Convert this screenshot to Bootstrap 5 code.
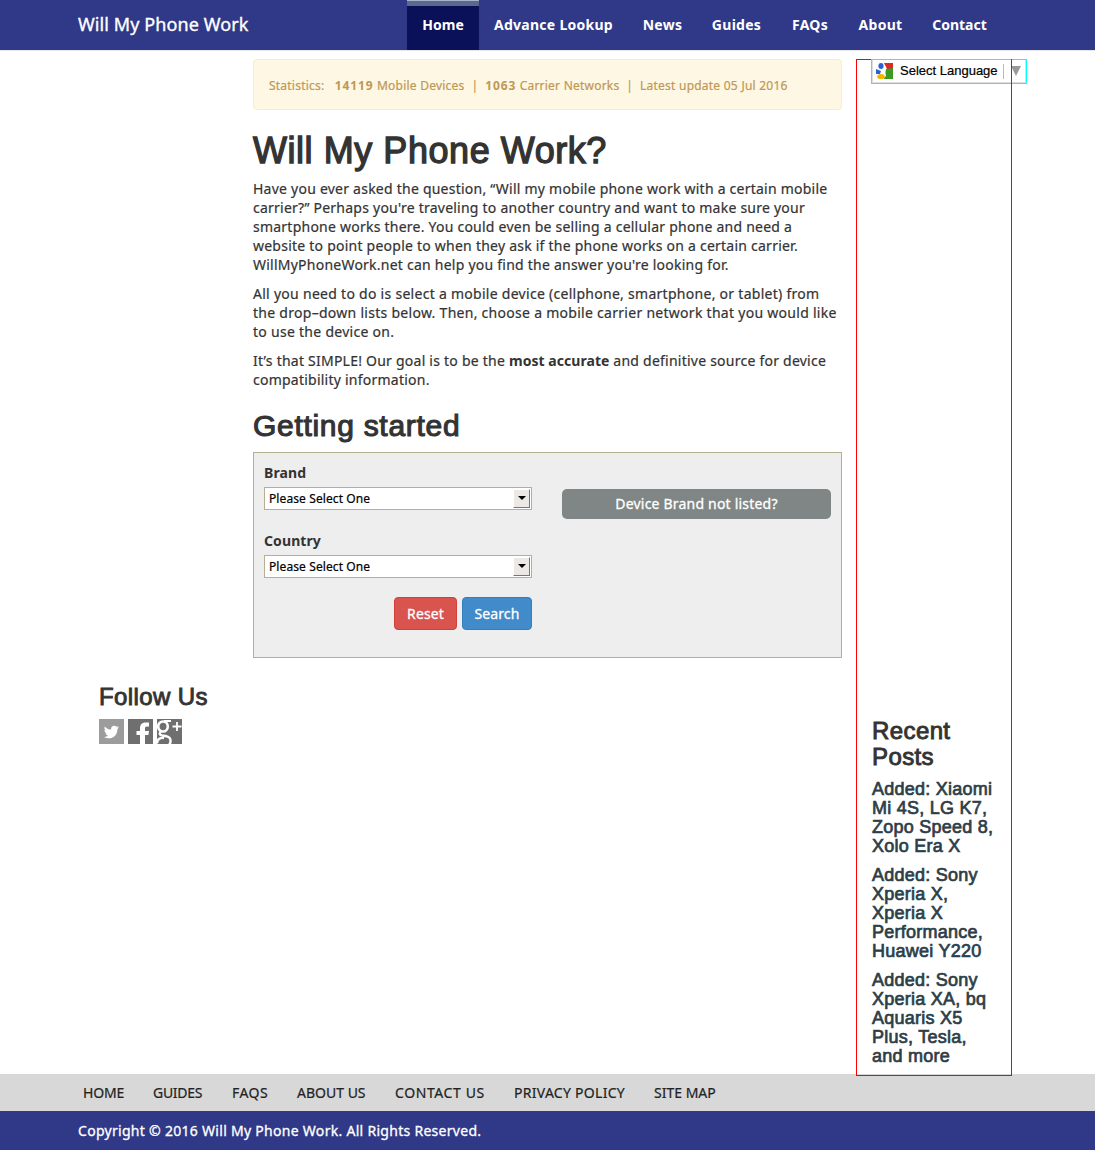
<!DOCTYPE html>
<html lang="en">
<head>
<meta charset="utf-8">
<meta name="viewport" content="width=device-width, initial-scale=1">
<title>Will My Phone Work</title>
<link rel="stylesheet" href="https://cdn.jsdelivr.net/npm/bootstrap@5.3.0/dist/css/bootstrap.min.css">
<style>
body{font-family:"Noto Sans","Open Sans",sans-serif;font-size:14px;line-height:19px;color:#333;background:#fff;overflow-x:hidden;-webkit-text-stroke:.2px currentColor}
p{margin:0 0 10px}
b{-webkit-text-stroke:0}
h1,h2,h3,h4{font-family:"Liberation Sans",Arial,sans-serif;font-weight:400;margin:0;color:#333;-webkit-text-stroke:.7px currentColor}
h1{font-size:36px;line-height:40px;letter-spacing:.55px;-webkit-text-stroke-width:1.3px}
h2{font-size:30px;line-height:33px;letter-spacing:.7px;-webkit-text-stroke-width:1.1px}
h3{font-size:24px;line-height:26px;letter-spacing:.4px;-webkit-text-stroke-width:.9px}
h4{font-size:18px;line-height:19px;color:#2c3e48;letter-spacing:.25px}
.topbar{height:51px;background:#303987;border-bottom:1px solid #e7e7e7;padding:0 93px 0 78px}
.brandname{font-size:18px;line-height:49px;color:#fff;text-decoration:none;letter-spacing:.1px;-webkit-text-stroke:.35px #fff}
.topbar .nav-link{height:50px;line-height:50px;padding:0;text-align:center;color:#fff;font-weight:700;font-size:14px;letter-spacing:.27px;-webkit-text-stroke:0}
.topbar .nav-link.w72,.topbar .nav-link.w85{letter-spacing:0}
.topbar .nav-link.active{background:#0a1158;border-top:6px solid #5e688d;line-height:38px;position:relative}
.topbar .nav-link.active::before{content:"";position:absolute;left:0;right:0;top:-6px;height:1px;background:#a4b7d0}
.w72{width:72px}.w149{width:149px}.w69{width:69px}.w79{width:79px}.w68{width:68px}.w73{width:73px}.w85{width:85px}
.page{height:1023px;padding:8px 83px 0 99px}
.leftside{width:154px;padding-top:625px}
.center{width:589px}
.rightside{width:156px;height:1017px;margin-left:14px;border:1px solid red;padding-left:14px;position:relative}
.stats{height:51px;background:#fdf7e3;border:1px solid #faebcc;border-radius:4px;color:#c09853;font-size:12px;padding:0 15px;line-height:51px;white-space:pre;margin-bottom:21px;letter-spacing:.22px;word-spacing:.1px}
.stats b{letter-spacing:.9px}
.intro{padding-top:8px;white-space:nowrap;letter-spacing:.235px}
.intro .howto{letter-spacing:.28px}
.intro b{letter-spacing:.05px}
.start{margin:20px 0 10px}
.finder{width:589px;height:206px;background:#eee;border:1px solid #b5b094;padding:10px}
.finder label{font-weight:700;line-height:20px;height:24px;display:block;letter-spacing:.1px;-webkit-text-stroke:0}
.finder .second{margin-top:21px}
.pick{height:23px;border:1px solid #b5b094;background:#fff;color:#000;font-size:12px;padding-left:4px;line-height:21px;letter-spacing:.1px}
.pick .arrow{width:17px;height:19px;background:#ece9e4;border:1px solid #fff;border-right-color:#777;border-bottom-color:#777;margin:1px 1px 0 0;padding-bottom:1px}
.half{width:268px}
.finder .btn{height:33px;font-size:14px;line-height:19px;padding:6px 0;color:#fff;border-radius:4px;white-space:nowrap;letter-spacing:.1px;-webkit-text-stroke:.3px #fff}
.breset{width:63px;background:#d9534f;border-color:#d43f3a}
.bsearch{width:70px;background:#428bca;border-color:#357ebd}
.finder .blisted{width:269px;height:30px;margin:26px 0 0 30px;padding:4px 0 6px;border:0;border-radius:5px;background:#808685;letter-spacing:.2px}
.translate{width:156px;height:25px;margin-top:-1px;border:1px solid #0ff;background:#fff;font:13px/22px "Liberation Sans",Arial,sans-serif;color:#000}
.translate .inner{height:23px;border:1px solid #ddd;border-top:0;padding-left:3px;width:154px}
.seltext{margin-left:6px;white-space:nowrap}
.sep{width:1px;height:15px;background:#bbb;margin:0 7px 0 5px}
.edge{position:absolute;top:-1px;right:-1px;width:1px;height:30px;background:red}
.recent{padding:634px 0 0 1px;white-space:nowrap}
.recent h4{margin-top:10px}
.foot{height:37px;background:#d8d8d8;padding-left:83px}
.foot a{color:#222;text-decoration:none;line-height:37px;white-space:nowrap}
.f1{width:70px;letter-spacing:-.2px}.f2{width:79px;letter-spacing:-.3px}.f3{width:65px;letter-spacing:.45px}.f4{width:98px}.f5{width:119px;letter-spacing:.6px}.f6{width:140px;letter-spacing:.28px}
.copy{height:39px;background:#303987;color:#fff;padding-left:78px;line-height:39px;white-space:nowrap;letter-spacing:.29px;-webkit-text-stroke:.3px #fff}
</style>
<script src="https://cdn.jsdelivr.net/npm/bootstrap@5.3.0/dist/js/bootstrap.bundle.min.js"></script>
</head>
<body>
<nav class="topbar d-flex justify-content-between">
  <a class="brandname" href="#">Will My Phone Work</a>
  <div class="nav flex-nowrap text-nowrap">
    <a class="nav-link active w72" href="#">Home</a>
    <a class="nav-link w149" href="#">Advance Lookup</a>
    <a class="nav-link w69" href="#">News</a>
    <a class="nav-link w79" href="#">Guides</a>
    <a class="nav-link w68" href="#">FAQs</a>
    <a class="nav-link w73" href="#">About</a>
    <a class="nav-link w85" href="#">Contact</a>
  </div>
</nav>
<div class="page d-flex align-items-start">
  <aside class="leftside flex-shrink-0">
    <h3>Follow Us</h3>
    <div class="d-flex" style="gap:4px;margin-top:9px">
      <svg width="25" height="25" viewBox="0 0 25 25"><path fill="#9c9c9c" d="M0 0h25v25H0z"/><path fill="#fff" d="M20 8.200l-1.700.5 1.300-1.700-2 .8a3.200 3.200 0 0 0-5.500 2.800C9.500 10.500 7.300 9.200 5.800 7.400c-.8 1.500-.4 3.200 1 4.200l-1.400-.4c0 1.600 1.100 2.800 2.600 3.200h-1.400c.4 1.300 1.600 2.100 3 2.200-1.400 1-3 1.400-4.700 1.300 5.800 3.500 13.500.2 13.500-7.700z"/></svg>
      <svg width="25" height="25" viewBox="0 0 25 25"><path fill="#6f6f6f" d="M0 0h25v25H0z"/><path fill="#fff" d="M12 25v-9H8.500v-4H12V9.500C12 5.500 14 3.500 17.500 3.500H21v4h-2.200c-1.400 0-1.800.7-1.800 2V12h4l-.6 4H17v9z"/></svg>
      <svg width="25" height="25" viewBox="0 0 25 25"><path fill="#6f6f6f" d="M0 0h25v25H0z"/><g fill="none" stroke="#fff"><ellipse cx="6" cy="7.500" rx="4.800" ry="5" stroke-width="2.600"/><path stroke-width="2" d="M7 2h7"/><path stroke-width="2.400" d="M4 12.500q-3 3 1 4 8 .5 8.500 4.500.3 3-1.500 5M0 24.500c0-4 3-6 7-5.500"/><path stroke-width="1.800" d="M15.500 7.500h9M20 3v9"/></g></svg>
    </div>
  </aside>
  <main class="center flex-shrink-0">
    <div class="stats">Statistics:   <b>14119</b> Mobile Devices  |  <b>1063</b> Carrier Networks  |  Latest update 05 Jul 2016</div>
    <h1>Will My Phone Work?</h1>
    <div class="intro">
      <p>Have you ever asked the question, “Will my mobile phone work with a certain mobile<br>carrier?” Perhaps you're traveling to another country and want to make sure your<br>smartphone works there. You could even be selling a cellular phone and need a<br>website to point people to when they ask if the phone works on a certain carrier.<br>WillMyPhoneWork.net can help you find the answer you're looking for.</p>
      <p class="howto">All you need to do is select a mobile device (cellphone, smartphone, or tablet) from<br>the drop–down lists below. Then, choose a mobile carrier network that you would like<br>to use the device on.</p>
      <p>It’s that SIMPLE! Our goal is to be the <b>most accurate</b> and definitive source for device<br>compatibility information.</p>
    </div>
    <h2 class="start">Getting started</h2>
    <form class="finder d-flex align-items-start">
      <div class="half">
        <label>Brand</label>
        <div class="pick d-flex justify-content-between"><span>Please Select One</span><span class="arrow d-flex align-items-center justify-content-center"><svg width="8" height="4"><path d="M0 0h8L4 4z"/></svg></span></div>
        <label class="second">Country</label>
        <div class="pick d-flex justify-content-between"><span>Please Select One</span><span class="arrow d-flex align-items-center justify-content-center"><svg width="8" height="4"><path d="M0 0h8L4 4z"/></svg></span></div>
        <div class="d-flex justify-content-end" style="gap:5px;margin-top:19px">
          <button type="button" class="btn breset">Reset</button>
          <button type="button" class="btn bsearch">Search</button>
        </div>
      </div>
      <button type="button" class="btn blisted">Device Brand not listed?</button>
    </form>
  </main>
  <aside class="rightside flex-shrink-0">
    <div class="translate"><div class="inner d-flex align-items-center">
      <svg width="18" height="18" viewBox="0 0 18 18"><path fill="#dc2a20" d="M8 1h9v6H11z"/><path fill="#3a9a22" d="M10 7l7-1v11H8z"/><path fill="#fff" d="M7 2l3 3-1 4 1 5-2 2-2-5z"/><ellipse cx="5" cy="4" rx="2.600" ry="3" fill="#2a62d4"/><path fill="#2a62d4" d="M0 7l5 2-1 3H0z"/><ellipse cx="5" cy="14.500" rx="3.800" ry="2.600" fill="#f5b400"/></svg>
      <span class="seltext">Select Language</span><span class="sep"></span><svg width="10" height="10"><path fill="#999" d="M0 0h10L5 10z"/></svg>
    </div></div>
    <span class="edge"></span>
    <div class="recent">
      <h3>Recent<br>Posts</h3>
      <h4>Added: Xiaomi<br>Mi 4S, LG K7,<br>Zopo Speed 8,<br>Xolo Era X</h4>
      <h4>Added: Sony<br>Xperia X,<br>Xperia X<br>Performance,<br>Huawei Y220</h4>
      <h4>Added: Sony<br>Xperia XA, bq<br>Aquaris X5<br>Plus, Tesla,<br>and more</h4>
    </div>
  </aside>
</div>
<footer>
  <div class="foot d-flex"><a class="f1" href="#">HOME</a><a class="f2" href="#">GUIDES</a><a class="f3" href="#">FAQS</a><a class="f4" href="#">ABOUT US</a><a class="f5" href="#">CONTACT US</a><a class="f6" href="#">PRIVACY POLICY</a><a href="#">SITE MAP</a></div>
  <div class="copy">Copyright © 2016 Will My Phone Work. All Rights Reserved.</div>
</footer>
</body>
</html>
